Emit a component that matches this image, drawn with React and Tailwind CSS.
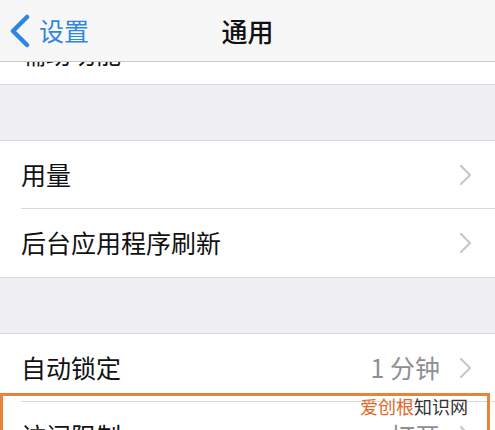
const font = { fontFamily: '"Noto Sans CJK SC", "Noto Sans", sans-serif' };

function Chevron() {
  return (
    <svg width="13" height="22" viewBox="0 0 13 22" className="shrink-0">
      <path d="M2 2l9 9-9 9" fill="none" stroke="#c7c7cc" strokeWidth="2.2" strokeLinecap="round" strokeLinejoin="round" />
    </svg>
  );
}

function Row({ label, value, divider }) {
  return (
    <div className="flex h-[68px] items-center bg-white pl-[21px]">
      <div className={`flex h-full flex-1 items-center pr-[23px] ${divider ? "border-b border-[#d9d9dd]" : ""}`}>
        <span className="flex-1 text-[25px] text-[#111]">{label}</span>
        {value && <span className="mr-[19px] text-[25px] text-[#8e8e93]">{value}</span>}
        <Chevron />
      </div>
    </div>
  );
}

export default function App() {
  return (
    <div className="relative h-[430px] w-[495px] overflow-hidden bg-[#efeff4]" style={font}>
      {/* nav bar */}
      <div className="relative z-10 flex h-[62px] items-center border-b border-[#c8c7cc] bg-[#f7f7f7]">
        <div className="flex items-center pl-[8px]">
          <svg width="24" height="34" viewBox="0 0 24 34">
            <path d="M19 3L5 17l14 14" fill="none" stroke="#2f86e0" strokeWidth="4.5" strokeLinecap="round" strokeLinejoin="round" />
          </svg>
          <span className="ml-[7px] text-[25px] text-[#2f86e0]">设置</span>
        </div>
        <div className="pointer-events-none absolute left-0 right-0 text-center text-[26px] font-medium text-[#111]">
          通用
        </div>
      </div>

      {/* first group, scrolled under the nav */}
      <div className="h-[23px] overflow-hidden border-b border-[#d9d9dd] bg-white">
        <div className="-mt-[42px] flex h-[68px] items-center pl-[21px] text-[25px] text-[#111]">辅助功能</div>
      </div>

      <div className="h-[55px]" />

      <div className="border-y border-[#d9d9dd]">
        <Row label="用量" divider />
        <Row label="后台应用程序刷新" />
      </div>

      <div className="h-[55px]" />

      <div className="border-t border-[#d9d9dd]">
        <Row label="自动锁定" value="1 分钟" divider />
        <Row label="访问限制" value="打开" />
      </div>

      {/* annotation box */}
      <div className="absolute left-[0px] top-[393px] h-[60px] w-[490px] border-[3px] border-[#e8843a]" />
      <div className="absolute right-[27px] top-[391px] text-[18px] leading-[30px]">
        <span className="text-[#e0692a]">爱创根</span>
        <span className="text-[#333]">知识网</span>
      </div>
    </div>
  );
}
